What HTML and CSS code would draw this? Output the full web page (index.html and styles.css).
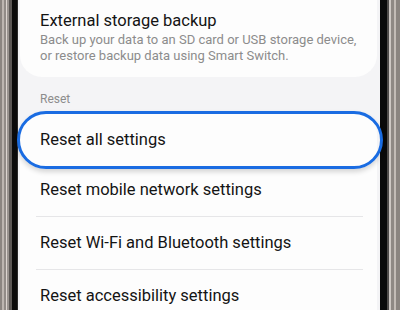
FILE: index.html
```html
<!DOCTYPE html>
<html lang="en">
<head>
<meta charset="utf-8">
<title>Reset settings</title>
<link rel="stylesheet" href="styles.css">
</head>
<body>
<div class="phone">
  <div class="bezel bezel-left"></div>
  <main class="screen">
    <section class="card card-top">
      <div class="item-title">External storage backup</div>
      <div class="item-sub">Back up your data to an SD card or USB storage device, or restore backup data using Smart Switch.</div>
    </section>
    <div class="section-label">Reset</div>
    <section class="card card-list">
      <div class="row row-first">
        <span class="row-text">Reset all settings</span>
        <span class="highlight"></span>
      </div>
      <div class="row"><span class="row-text">Reset mobile network settings</span></div>
      <div class="row row-sep"><span class="row-text">Reset Wi-Fi and Bluetooth settings</span></div>
      <div class="row row-sep"><span class="row-text">Reset accessibility settings</span></div>
    </section>
  </main>
  <div class="bezel bezel-right"></div>
</div>
</body>
</html>
```

FILE: styles.css
```css
* { box-sizing: border-box; }
html, body { margin: 0; padding: 0; }
body {
  width: 400px;
  height: 310px;
  overflow: hidden;
  background: #000;
  font-family: Roboto, "Noto Sans", "Liberation Sans", sans-serif;
}
.phone {
  display: flex;
  height: 310px;
  position: relative;
}
.bezel { flex: none; height: 100%; }
.bezel-left {
  width: 18px;
  background: linear-gradient(to right,
    #8b8581 0, #8b8581 2px,
    #bdb6b1 2px, #bdb6b1 4px,
    #918b87 4px, #918b87 6px,
    #dcd5d1 6px, #dcd5d1 7px,
    #9a9490 7px, #9a9490 9px,
    #5b5755 9px, #5b5755 12px,
    #0b0b0b 12px, #0b0b0b 17px,
    #2a2a2a 17px, #2a2a2a 18px);
}
.bezel-right {
  width: 20px;
  background: linear-gradient(to right,
    #0a0a0a 0, #0a0a0a 7px,
    #4f4c4a 7px, #4f4c4a 9px,
    #cdc7c3 9px, #cdc7c3 11px,
    #8e8884 11px, #8e8884 14px,
    #c2bbb6 14px, #c2bbb6 16px,
    #8a8480 16px, #8a8480 20px);
}
.screen {
  flex: 1;
  background: #f4f4f6;
  display: flex;
  flex-direction: column;
  overflow: visible;
}
.card {
  background: #fdfdfd;
  margin: 0 3px 0 2px;
}
.card-top {
  border-radius: 0 0 22px 22px;
  padding: 11px 20px 12px 20px;
}
.item-title {
  font-size: 16.5px;
  line-height: 20px;
  color: #141414;
}
.item-sub {
  margin-top: 0.5px;
  font-size: 13px;
  line-height: 16.7px;
  color: #8c8c8c;
}
.section-label {
  margin: 14px 0 5.5px 22px;
  font-size: 12px;
  line-height: 16px;
  color: #8c8c8c;
}
.card-list {
  border-radius: 22px 22px 0 0;
  flex: 1;
}
.row {
  height: 52px;
  display: flex;
  align-items: center;
  padding-left: 20px;
  position: relative;
}
.row-first { padding-top: 3px; }
.row-sep::before {
  content: "";
  position: absolute;
  top: -1px;
  left: 16px;
  right: 14px;
  height: 1px;
  background: #e6e6e8;
}
.row-sep { margin-top: 1px; }
.row-text {
  font-size: 16.5px;
  line-height: 20px;
  color: #141414;
}
.highlight {
  position: absolute;
  left: -3px;
  right: -6px;
  top: -1.7px;
  bottom: -4.3px;
  border: 3.5px solid #1a6ce2;
  border-radius: 30px;
  box-shadow: 0 3px 5px rgba(0, 0, 0, 0.16);
}
```
